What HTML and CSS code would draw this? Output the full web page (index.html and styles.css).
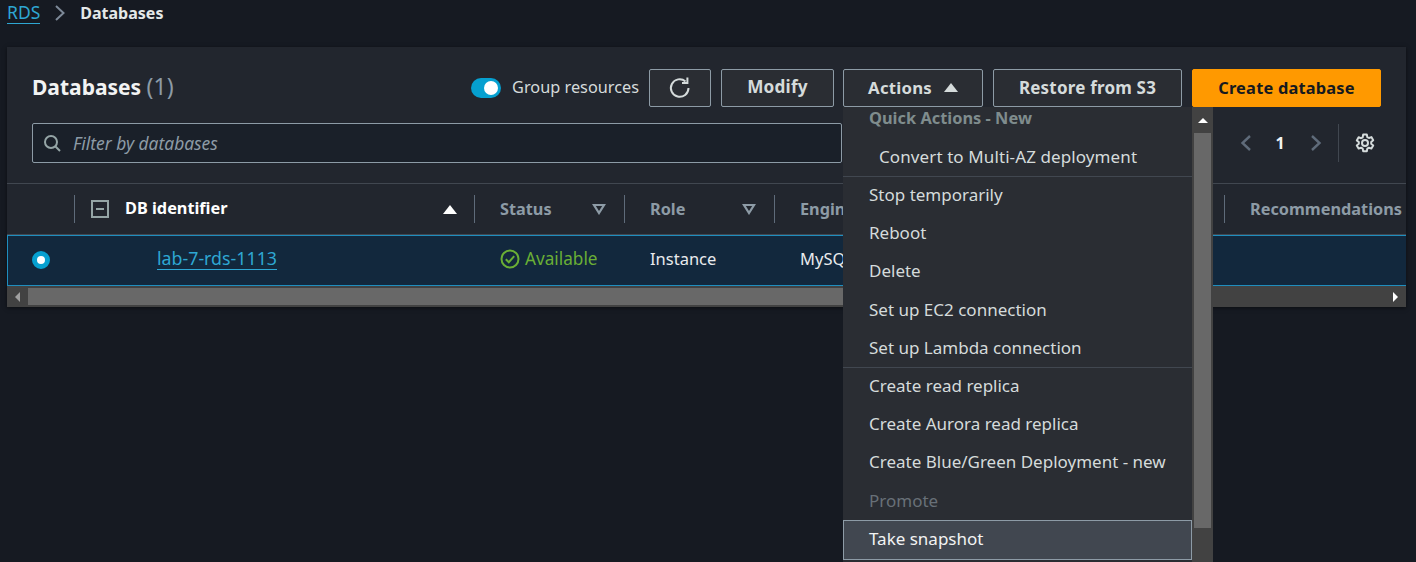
FILE: index.html
```html
<!DOCTYPE html>
<html lang="en">
<head>
  <meta charset="UTF-8">
  <meta name="viewport" content="width=device-width, initial-scale=1.0">
  <title>RDS Databases</title>
  <link rel="stylesheet" href="styles.css">
</head>
<body>

<nav class="crumbs">
  <a href="#" class="crumb-link">RDS</a>
  <svg class="crumb-sep" width="12" height="18" viewBox="0 0 12 18"><path d="M2 2l7.5 7L2 16" fill="none" stroke="#7d8998" stroke-width="2"/></svg>
  <span class="crumb-current">Databases</span>
</nav>

<section class="panel">
  <div class="toolbar">
    <h1 class="title">Databases <span class="count">(1)</span></h1>
    <div class="actions">
      <span class="toggle"><span class="knob"></span></span>
      <span class="toggle-label">Group resources</span>
      <button class="btn btn-icon">
        <svg width="24" height="24" viewBox="0 0 24 24" fill="none" stroke="#d5dbdb" stroke-width="2"><path d="M20.5 12a8.8 8.8 0 1 1-3-6.6"/><path d="M19.4 1.6v5.4h-5.4" stroke-linejoin="miter"/></svg>
      </button>
      <button class="btn btn-modify">Modify</button>
      <div class="menu-wrap">
        <button class="btn btn-actions">Actions <span class="caret-up"></span></button>
        <div class="menu">
          <div class="menu-list">
            <div class="menu-item menu-head">Quick Actions - New</div>
            <div class="menu-item menu-sub">Convert to Multi-AZ deployment</div>
            <div class="menu-item menu-top">Stop temporarily</div>
            <div class="menu-item">Reboot</div>
            <div class="menu-item">Delete</div>
            <div class="menu-item">Set up EC2 connection</div>
            <div class="menu-item">Set up Lambda connection</div>
            <div class="menu-item menu-top">Create read replica</div>
            <div class="menu-item">Create Aurora read replica</div>
            <div class="menu-item">Create Blue/Green Deployment - new</div>
            <div class="menu-item menu-off">Promote</div>
            <div class="menu-item menu-hover">Take snapshot</div>
          </div>
          <div class="menu-scroll">
            <div class="menu-scroll-btn"><span class="tri-up"></span></div>
            <div class="menu-scroll-thumb"></div>
          </div>
        </div>
      </div>
      <button class="btn btn-restore">Restore from S3</button>
      <button class="btn btn-primary">Create database</button>
    </div>
  </div>

  <div class="filter-row">
    <div class="filter">
      <svg width="18" height="18" viewBox="0 0 18 18" fill="none" stroke="#95a5a6" stroke-width="2"><circle cx="8" cy="8" r="6"/><path d="M12.5 12.5L17 17"/></svg>
      <span class="filter-text">Filter by databases</span>
    </div>
    <div class="pager">
      <svg width="12" height="18" viewBox="0 0 12 18"><path d="M10 2L2.5 9l7.5 7" fill="none" stroke="#5f6b7a" stroke-width="2.4"/></svg>
      <span class="page-num">1</span>
      <svg width="12" height="18" viewBox="0 0 12 18"><path d="M2 2l7.5 7L2 16" fill="none" stroke="#5f6b7a" stroke-width="2.4"/></svg>
      <span class="pager-line"></span>
      <svg width="20" height="20" viewBox="0 0 20 20" fill="none" stroke="#d5dbdb" stroke-width="2"><path d="M8.2 1.5h3.6l.5 2.6 1.6.9 2.5-.9 1.8 3.1-2 1.7v1.9l2 1.7-1.8 3.1-2.5-.9-1.6.9-.5 2.6H8.2l-.5-2.6-1.6-.9-2.5.9-1.8-3.1 2-1.7V9.1l-2-1.7 1.8-3.1 2.5.9 1.6-.9z" stroke-linejoin="round"/><circle cx="10" cy="10" r="3"/></svg>
    </div>
  </div>

  <div class="table">
    <div class="row head-row">
      <div class="cell"></div>
      <div class="cell th th-active">
        <span class="collapse"><span class="dash"></span></span>
        <span class="th-name">DB identifier</span>
        <span class="sort-up"></span>
      </div>
      <div class="cell th">Status <svg class="sort-down" width="14" height="12" viewBox="0 0 14 12"><path d="M2 2h10l-5 8z" fill="none" stroke="#8d9ba6" stroke-width="2.2"/></svg></div>
      <div class="cell th">Role <svg class="sort-down" width="14" height="12" viewBox="0 0 14 12"><path d="M2 2h10l-5 8z" fill="none" stroke="#8d9ba6" stroke-width="2.2"/></svg></div>
      <div class="cell th">Engine</div>
      <div class="cell th"></div>
      <div class="cell th"></div>
      <div class="cell th">Recommendations</div>
    </div>
    <div class="row body-row">
      <div class="cell cell-radio"><span class="radio"></span></div>
      <div class="cell td-id"><a href="#" class="db-link">lab-7-rds-1113</a></div>
      <div class="cell status">
        <svg width="20" height="20" viewBox="0 0 20 20" fill="none" stroke="#6aaf35" stroke-width="2"><circle cx="10" cy="10" r="8.5"/><path d="M5.8 10.2l3 3 5.4-6"/></svg>
        Available
      </div>
      <div class="cell">Instance</div>
      <div class="cell">MySQL</div>
      <div class="cell"></div>
      <div class="cell"></div>
      <div class="cell"></div>
    </div>
    <div class="hscroll">
      <div class="hscroll-btn"><span class="tri-left"></span></div>
      <div class="hscroll-thumb"></div>
      <div class="hscroll-btn"><span class="tri-right"></span></div>
    </div>
  </div>
</section>

</body>
</html>
```

FILE: styles.css
```css
* {
  box-sizing: border-box;
}
html, body {
  height: 562px;
  overflow: hidden;
}
body {
  margin: 0;
  background: #161a22;
  color: #d5dbdb;
  font-family: "Noto Sans", sans-serif;
  font-size: 16px;
}
a {
  color: #2ea7d3;
  text-decoration: none;
}

/* breadcrumb */
.crumbs {
  display: flex;
  align-items: center;
  height: 25px;
  padding-left: 7px;
}
.crumb-link {
  border-bottom: 1px solid #2ea7d3;
  font-size: 17.5px;
  line-height: 22px;
}
.crumb-sep {
  margin: 0 14px 0 14px;
}
.crumb-current {
  font-size: 16px;
  font-weight: 700;
  color: #e4e8e8;
}

/* main panel */
.panel {
  width: 1399px;
  height: 260px;
  margin: 22px 0 0 7px;
  background: #22262e;
  box-shadow: 0 1px 4px rgba(0,0,0,0.5);
}
.toolbar {
  display: flex;
  align-items: center;
  justify-content: space-between;
  padding: 22px 25px 0 25px;
}
.title {
  margin: -4px 0 0 0;
  font-size: 21px;
  font-weight: 700;
  color: #f2f3f3;
}
.count {
  font-size: 23px;
  font-weight: 400;
  color: #8d9ba6;
}
.actions {
  display: flex;
  align-items: center;
}
.toggle {
  display: flex;
  align-items: center;
  justify-content: flex-end;
  width: 30px;
  height: 20px;
  padding-right: 3px;
  background: #06a0d0;
  border-radius: 10px;
}
.knob {
  width: 14px;
  height: 14px;
  background: #fff;
  border-radius: 50%;
}
.toggle-label {
  margin: -2px 10px 0 11px;
  font-size: 16.3px;
  color: #d5dbdb;
}
.btn {
  height: 38px;
  margin-left: 10px;
  padding: 0 0 2px;
  background: #2a2d33;
  border: 1px solid #8d9ba6;
  border-radius: 2px;
  color: #d5dbdb;
  font-family: inherit;
  font-size: 16.6px;
  font-weight: 700;
  letter-spacing: 0.2px;
}
.btn-icon {
  display: flex;
  align-items: center;
  justify-content: center;
  width: 62px;
  margin-left: 0;
  padding: 0;
}
.btn-modify {
  width: 113px;
  padding-bottom: 3px;
  font-size: 17.2px;
}
.btn-actions {
  display: flex;
  align-items: center;
  justify-content: center;
  gap: 12px;
  width: 140px;
  margin-left: 0;
  font-size: 16.8px;
}
.btn-restore {
  width: 189px;
  font-size: 17px;
}
.btn-primary {
  width: 189px;
  background: #ff9900;
  border-color: #ff9900;
  color: #16191f;
  font-size: 16.4px;
}
.caret-up, .sort-up {
  width: 0;
  height: 0;
  border-left: 7px solid transparent;
  border-right: 7px solid transparent;
  border-bottom: 9px solid #d5dbdb;
}
.sort-up {
  border-bottom-color: #fff;
}
.sort-down {
  margin-left: auto;
}
.menu-wrap {
  position: relative;
  margin-left: 9px;
}

/* actions dropdown */
.menu {
  position: absolute;
  z-index: 5;
  top: 38px;
  left: 0;
  display: flex;
  width: 370px;
  height: 455px;
  background: #2a2d33;
}
.menu-list {
  flex: 1;
  overflow: hidden;
}
.menu-item {
  height: 38.2px;
  padding: 0 26px;
  font-size: 17px;
  line-height: 37px;
  color: #d5dbdb;
  white-space: nowrap;
}
.menu-head {
  height: 22px;
  font-size: 16.4px;
  line-height: 22px;
  font-weight: 700;
  color: #7f8c8d;
}
.menu-sub {
  height: 47px;
  padding-left: 36px;
  padding-top: 9px;
  letter-spacing: 0.1px;
}
.menu-top {
  border-top: 1px solid #414750;
  line-height: 35px;
}
.menu-off {
  color: #687078;
}
.menu-hover {
  height: 40px;
  background: #414750;
  border: 1px solid #8d9ba6;
  padding-left: 25px;
  line-height: 35px;
  color: #f2f3f3;
}
.menu-scroll {
  width: 21px;
  background: #424242;
}
.menu-scroll-btn {
  display: flex;
  align-items: center;
  justify-content: center;
  height: 26px;
}
.menu-scroll-thumb {
  width: 17px;
  height: 395px;
  margin-left: 2px;
  background: #686868;
}
.tri-up {
  width: 0;
  height: 0;
  border-left: 5px solid transparent;
  border-right: 5px solid transparent;
  border-bottom: 5px solid #fff;
}
.tri-left, .tri-right {
  width: 0;
  height: 0;
  border-top: 5px solid transparent;
  border-bottom: 5px solid transparent;
}
.tri-left {
  border-right: 5px solid #a0a0a0;
}
.tri-right {
  border-left: 5px solid #fff;
}

/* filter and pager */
.filter-row {
  display: flex;
  align-items: center;
  padding: 16px 25px 0 25px;
}
.filter {
  display: flex;
  align-items: center;
  gap: 12px;
  width: 810px;
  height: 40px;
  padding-left: 10px;
  background: #1a2029;
  border: 1px solid #8d9ba6;
  border-radius: 2px;
}
.filter-text {
  font-size: 17.4px;
  font-style: italic;
  color: #8d9ba6;
}
.pager {
  display: flex;
  align-items: center;
  height: 40px;
  margin-left: auto;
  margin-right: 6px;
}
.page-num {
  width: 56px;
  margin-right: 2px;
  font-weight: 700;
  text-align: center;
  color: #f2f3f3;
}
.pager-line {
  width: 1px;
  height: 38px;
  margin: 0 16px;
  background: #414750;
}

/* table */
.table {
  margin-top: 20px;
  border-top: 1px solid #414750;
}
.row {
  display: grid;
  grid-template-columns: 67px 400px 150px 150px 150px 150px 150px 1fr;
  align-items: center;
}
.head-row {
  height: 51px;
  border-bottom: 1px solid #414750;
}
.head-row .cell {
  height: 28px;
  border-left: 1px solid #5f6b7a;
}
.head-row .cell:first-child {
  border-left: 0;
}
.th {
  display: flex;
  align-items: center;
  padding: 0 18px 0 25px;
  font-size: 16.3px;
  font-weight: 700;
  color: #8d9ba6;
}
.th-active {
  padding-left: 16px;
  padding-right: 17px;
  color: #fff;
}
.th-name {
  margin-left: 16px;
  margin-right: auto;
  margin-top: -2px;
}
.collapse {
  display: flex;
  align-items: center;
  justify-content: center;
  width: 18px;
  height: 18px;
  border: 2px solid #95a5a6;
}
.dash {
  width: 8px;
  height: 2px;
  background: #95a5a6;
}
.body-row {
  height: 51px;
  background: #12283d;
  border-top: 1px solid #1f8ebe;
  border-bottom: 1px solid #1f8ebe;
  border-left: 1px solid #1f8ebe;
}
.body-row .cell {
  display: flex;
  align-items: center;
  height: 49px;
  padding-left: 25px;
  padding-bottom: 4px;
  font-size: 16.5px;
  color: #e9ebed;
  white-space: nowrap;
}
.body-row .cell-radio {
  padding-left: 24px;
  padding-bottom: 2px;
}
.radio {
  width: 18px;
  height: 18px;
  background: #fff;
  border: 5.5px solid #06a0d0;
  border-radius: 50%;
}
.body-row .td-id {
  padding-left: 82px;
  font-size: 17.8px;
}
.db-link {
  border-bottom: 1px solid #2ea7d3;
  line-height: 22px;
}
.body-row .status {
  gap: 5px;
  font-size: 17.2px;
  color: #6aaf35;
}
.hscroll {
  display: flex;
  height: 21px;
  background: #424242;
}
.hscroll-btn {
  display: flex;
  align-items: center;
  justify-content: center;
  width: 21px;
}
.hscroll-thumb {
  width: 1150px;
  height: 17px;
  margin-top: 2px;
  background: #686868;
}
.hscroll-btn:last-child {
  margin-left: auto;
}
```
